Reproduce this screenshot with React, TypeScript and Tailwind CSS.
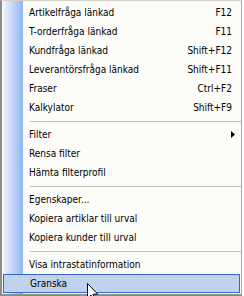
import React from 'react';

type Item = { label: string; shortcut?: string; submenu?: boolean; sep?: boolean; active?: boolean };

const items: Item[] = [
    { label: 'Artikelfråga länkad', shortcut: 'F12' },
    { label: 'T-orderfråga länkad', shortcut: 'F11' },
    { label: 'Kundfråga länkad', shortcut: 'Shift+F12' },
    { label: 'Leverantörsfråga länkad', shortcut: 'Shift+F11' },
    { label: 'Fraser', shortcut: 'Ctrl+F2' },
    { label: 'Kalkylator', shortcut: 'Shift+F9' },
    { label: '', sep: true },
    { label: 'Filter', submenu: true },
    { label: 'Rensa filter' },
    { label: 'Hämta filterprofil' },
    { label: '', sep: true },
    { label: 'Egenskaper...' },
    { label: 'Kopiera artiklar till urval' },
    { label: 'Kopiera kunder till urval' },
    { label: '', sep: true },
    { label: 'Visa intrastatinformation' },
    { label: 'Granska', active: true },
];

function Cursor() {
    return (
        <svg width="12" height="19" viewBox="0 0 12 19" className="absolute left-[83px] top-[8px]">
            <path d="M0.5 0.5 L0.5 15.5 L4 12 L6.5 18 L8.5 17 L6 11.2 L10.8 11.2 Z" fill="white" stroke="black" strokeWidth="1" />
        </svg>
    );
}

export default function App() {
    return (
        <div className="w-[244px] h-[296px] bg-white" style={{ fontFamily: '"DejaVu Sans Condensed", Tahoma, "Liberation Sans", sans-serif' }}>
            <div className="relative w-[242px] h-[296px] bg-[#fcfcf9] border-l-2 border-l-[#8c8c8c] border-r border-r-[#a8a8a8] border-t border-t-[#d4d0c8] border-b-2 border-b-[#8c8c8c] pt-[2px] pl-[1px] flex flex-col">
                <div className="absolute left-[1px] top-0 bottom-0 w-[20px] bg-gradient-to-r from-[#f2f6fe] to-[#8fb3ef]" />
                {items.map((it, i) =>
                    it.sep ? (
                        <div key={i} className="relative h-[8px] flex items-center pl-[27px]">
                            <div className="h-px w-full bg-[#c5c2b8]" />
                        </div>
                    ) : (
                        <div
                            key={i}
                            className={
                                'relative h-[19px] flex items-center pl-[26px] pr-[9px] text-[10px] text-black ' +
                                (it.active ? 'bg-[#c1d2ee] border border-[#316ac5] pl-[25px] pr-[8px] mr-[1px]' : '')
                            }
                        >
                            <span className="flex-1 whitespace-nowrap">{it.label}</span>
                            {it.shortcut && <span className="whitespace-nowrap">{it.shortcut}</span>}
                            {it.submenu && (
                                <svg width="4" height="7" viewBox="0 0 4 7" className="mr-[-3px]">
                                    <path d="M0 0 L4 3.5 L0 7 Z" fill="black" />
                                </svg>
                            )}
                            {it.active && <Cursor />}
                        </div>
                    )
                )}
            </div>
        </div>
    );
}
